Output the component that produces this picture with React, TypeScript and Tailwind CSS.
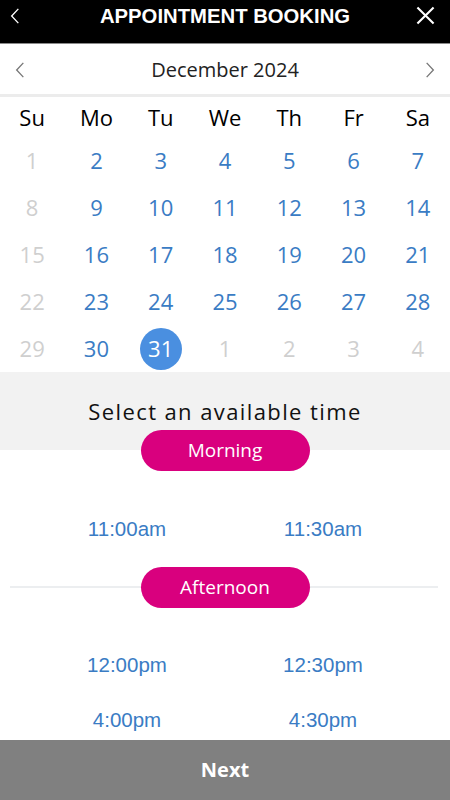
import React from 'react';

const weekDays = ['Su', 'Mo', 'Tu', 'We', 'Th', 'Fr', 'Sa'];

type Day = { n: number; muted?: boolean; selected?: boolean };

const weeks: Day[][] = [
  [{ n: 1, muted: true }, { n: 2 }, { n: 3 }, { n: 4 }, { n: 5 }, { n: 6 }, { n: 7 }],
  [{ n: 8, muted: true }, { n: 9 }, { n: 10 }, { n: 11 }, { n: 12 }, { n: 13 }, { n: 14 }],
  [{ n: 15, muted: true }, { n: 16 }, { n: 17 }, { n: 18 }, { n: 19 }, { n: 20 }, { n: 21 }],
  [{ n: 22, muted: true }, { n: 23 }, { n: 24 }, { n: 25 }, { n: 26 }, { n: 27 }, { n: 28 }],
  [
    { n: 29, muted: true },
    { n: 30 },
    { n: 31, selected: true },
    { n: 1, muted: true },
    { n: 2, muted: true },
    { n: 3, muted: true },
    { n: 4, muted: true },
  ],
];

const Chevron: React.FC<{ dir: 'left' | 'right'; className?: string }> = ({ dir, className }) => (
  <svg viewBox="0 0 12 20" className={className} fill="none" stroke="currentColor" strokeWidth="1.6">
    {dir === 'left' ? <path d="M10 1.5 L2 10 L10 18.5" /> : <path d="M2 1.5 L10 10 L2 18.5" />}
  </svg>
);

const Pill: React.FC<{ label: string }> = ({ label }) => (
  <div className="w-[169px] h-[41px] rounded-full bg-[#d9007e] text-white flex items-center justify-center text-[19px] font-['Open_Sans',sans-serif]">
    {label}
  </div>
);

const TimeRow: React.FC<{ times: [string, string]; className?: string }> = ({ times, className }) => (
  <div className={`grid grid-cols-2 px-[29px] ${className ?? ''}`}>
    {times.map(t => (
      <div key={t} className="text-center text-[20.5px] leading-[28px] text-[#3a7cc4] font-['Liberation_Sans',Arial,sans-serif]">
        {t}
      </div>
    ))}
  </div>
);

export default function App() {
  return (
    <div className="w-[450px] h-[800px] bg-white flex flex-col overflow-hidden">
      {/* top bar */}
      <div className="h-[44px] bg-black border-b border-[#8a8a8a] relative flex items-start justify-center">
        <Chevron dir="left" className="absolute left-[10px] top-[6px] w-[10px] h-[20px] text-white" />
        <h1 className="mt-[3px] text-white font-bold text-[20.3px] leading-[26px] font-['Liberation_Sans',Arial,sans-serif]">
          APPOINTMENT BOOKING
        </h1>
        <svg viewBox="0 0 20 20" className="absolute right-[15px] top-[6px] w-[19px] h-[19px] text-white" stroke="currentColor" strokeWidth="2.2">
          <path d="M1.5 1.5 L18.5 18.5 M18.5 1.5 L1.5 18.5" />
        </svg>
      </div>

      {/* month nav */}
      <div className="h-[53px] pt-[2px] flex items-center justify-between px-[15px] border-b-[3px] border-[#ececec] font-['Open_Sans',sans-serif]">
        <Chevron dir="left" className="w-[10px] h-[18px] text-[#777]" />
        <span className="text-[20px] text-[#222]">December 2024</span>
        <Chevron dir="right" className="w-[10px] h-[18px] text-[#777]" />
      </div>

      {/* calendar */}
      <div className="font-['Open_Sans',sans-serif]">
        <div className="grid grid-cols-7 h-[40px] items-center">
          {weekDays.map(d => (
            <div key={d} className="text-center text-[22px] text-black">
              {d}
            </div>
          ))}
        </div>
        {weeks.map((w, i) => (
          <div key={i} className="grid grid-cols-7 h-[47px] items-center">
            {w.map((d, j) => (
              <div key={j} className="flex justify-center">
                {d.selected ? (
                  <span className="w-[42px] h-[42px] rounded-full bg-[#4a8fe0] text-white flex items-center justify-center text-[22px]">
                    {d.n}
                  </span>
                ) : (
                  <span className={`text-[22px] ${d.muted ? 'text-[#cfcfcf]' : 'text-[#3a7cc4]'}`}>{d.n}</span>
                )}
              </div>
            ))}
          </div>
        ))}
      </div>

      {/* time picker */}
      <div className="h-[78px] bg-[#f2f2f2] flex justify-center pt-[24px]">
        <span className="text-[22px] tracking-[1.4px] text-[#111] font-['Open_Sans',sans-serif] leading-[30px]">
          Select an available time
        </span>
      </div>
      <div className="flex justify-center -mt-[20px]">
        <Pill label="Morning" />
      </div>
      <TimeRow times={['11:00am', '11:30am']} className="mt-[44px]" />

      <div className="relative flex justify-center mt-[24px]">
        <div className="absolute left-[10px] right-[12px] top-[19px] h-[2px] bg-[#eceef0]" />
        <div className="relative">
          <Pill label="Afternoon" />
        </div>
      </div>
      <TimeRow times={['12:00pm', '12:30pm']} className="mt-[43px]" />
      <TimeRow times={['4:00pm', '4:30pm']} className="mt-[27px]" />

      <div className="mt-auto h-[60px] bg-[#808080] flex items-center justify-center">
        <span className="text-white font-bold text-[20px] font-['Open_Sans',sans-serif]">Next</span>
      </div>
    </div>
  );
}
